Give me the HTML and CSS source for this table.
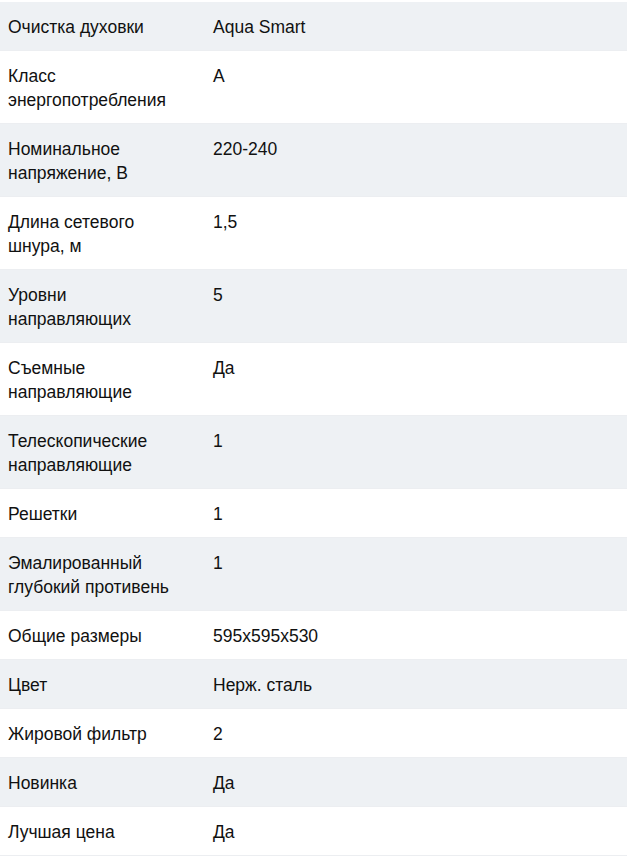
FILE: index.html
```html
<!DOCTYPE html>
<html lang="ru">
<head>
<meta charset="utf-8">
<title>Характеристики</title>
<link rel="stylesheet" href="styles.css">
</head>
<body>
<div class="specs">
  <div class="row"><div class="name">Очистка духовки</div><div class="value">Aqua Smart</div></div>
  <div class="row"><div class="name">Класс энергопотребления</div><div class="value">A</div></div>
  <div class="row"><div class="name">Номинальное напряжение, В</div><div class="value">220-240</div></div>
  <div class="row"><div class="name">Длина сетевого шнура, м</div><div class="value">1,5</div></div>
  <div class="row"><div class="name">Уровни направляющих</div><div class="value">5</div></div>
  <div class="row"><div class="name">Съемные направляющие</div><div class="value">Да</div></div>
  <div class="row"><div class="name">Телескопические направляющие</div><div class="value">1</div></div>
  <div class="row"><div class="name">Решетки</div><div class="value">1</div></div>
  <div class="row"><div class="name">Эмалированный глубокий противень</div><div class="value">1</div></div>
  <div class="row"><div class="name">Общие размеры</div><div class="value">595x595x530</div></div>
  <div class="row"><div class="name">Цвет</div><div class="value">Нерж. сталь</div></div>
  <div class="row"><div class="name">Жировой фильтр</div><div class="value">2</div></div>
  <div class="row"><div class="name">Новинка</div><div class="value">Да</div></div>
  <div class="row"><div class="name">Лучшая цена</div><div class="value">Да</div></div>
</div>
</body>
</html>
```
FILE: styles.css
```css
html, body {
  margin: 0;
  padding: 0;
  background: #ffffff;
}
body {
  font-family: "Liberation Sans", Arial, sans-serif;
  font-size: 17.5px;
  line-height: 24px;
  color: #111111;
}
.specs {
  padding-top: 2px;
  display: flex;
  flex-direction: column;
}
.row {
  display: grid;
  grid-template-columns: 205px 1fr;
  border-bottom: 1px solid #eceef1;
}
.row:nth-child(odd) {
  background: #eef1f4;
}
.name {
  padding: 13px 28px 11px 8px;
}
.value {
  padding: 13px 8px 11px;
}
```
